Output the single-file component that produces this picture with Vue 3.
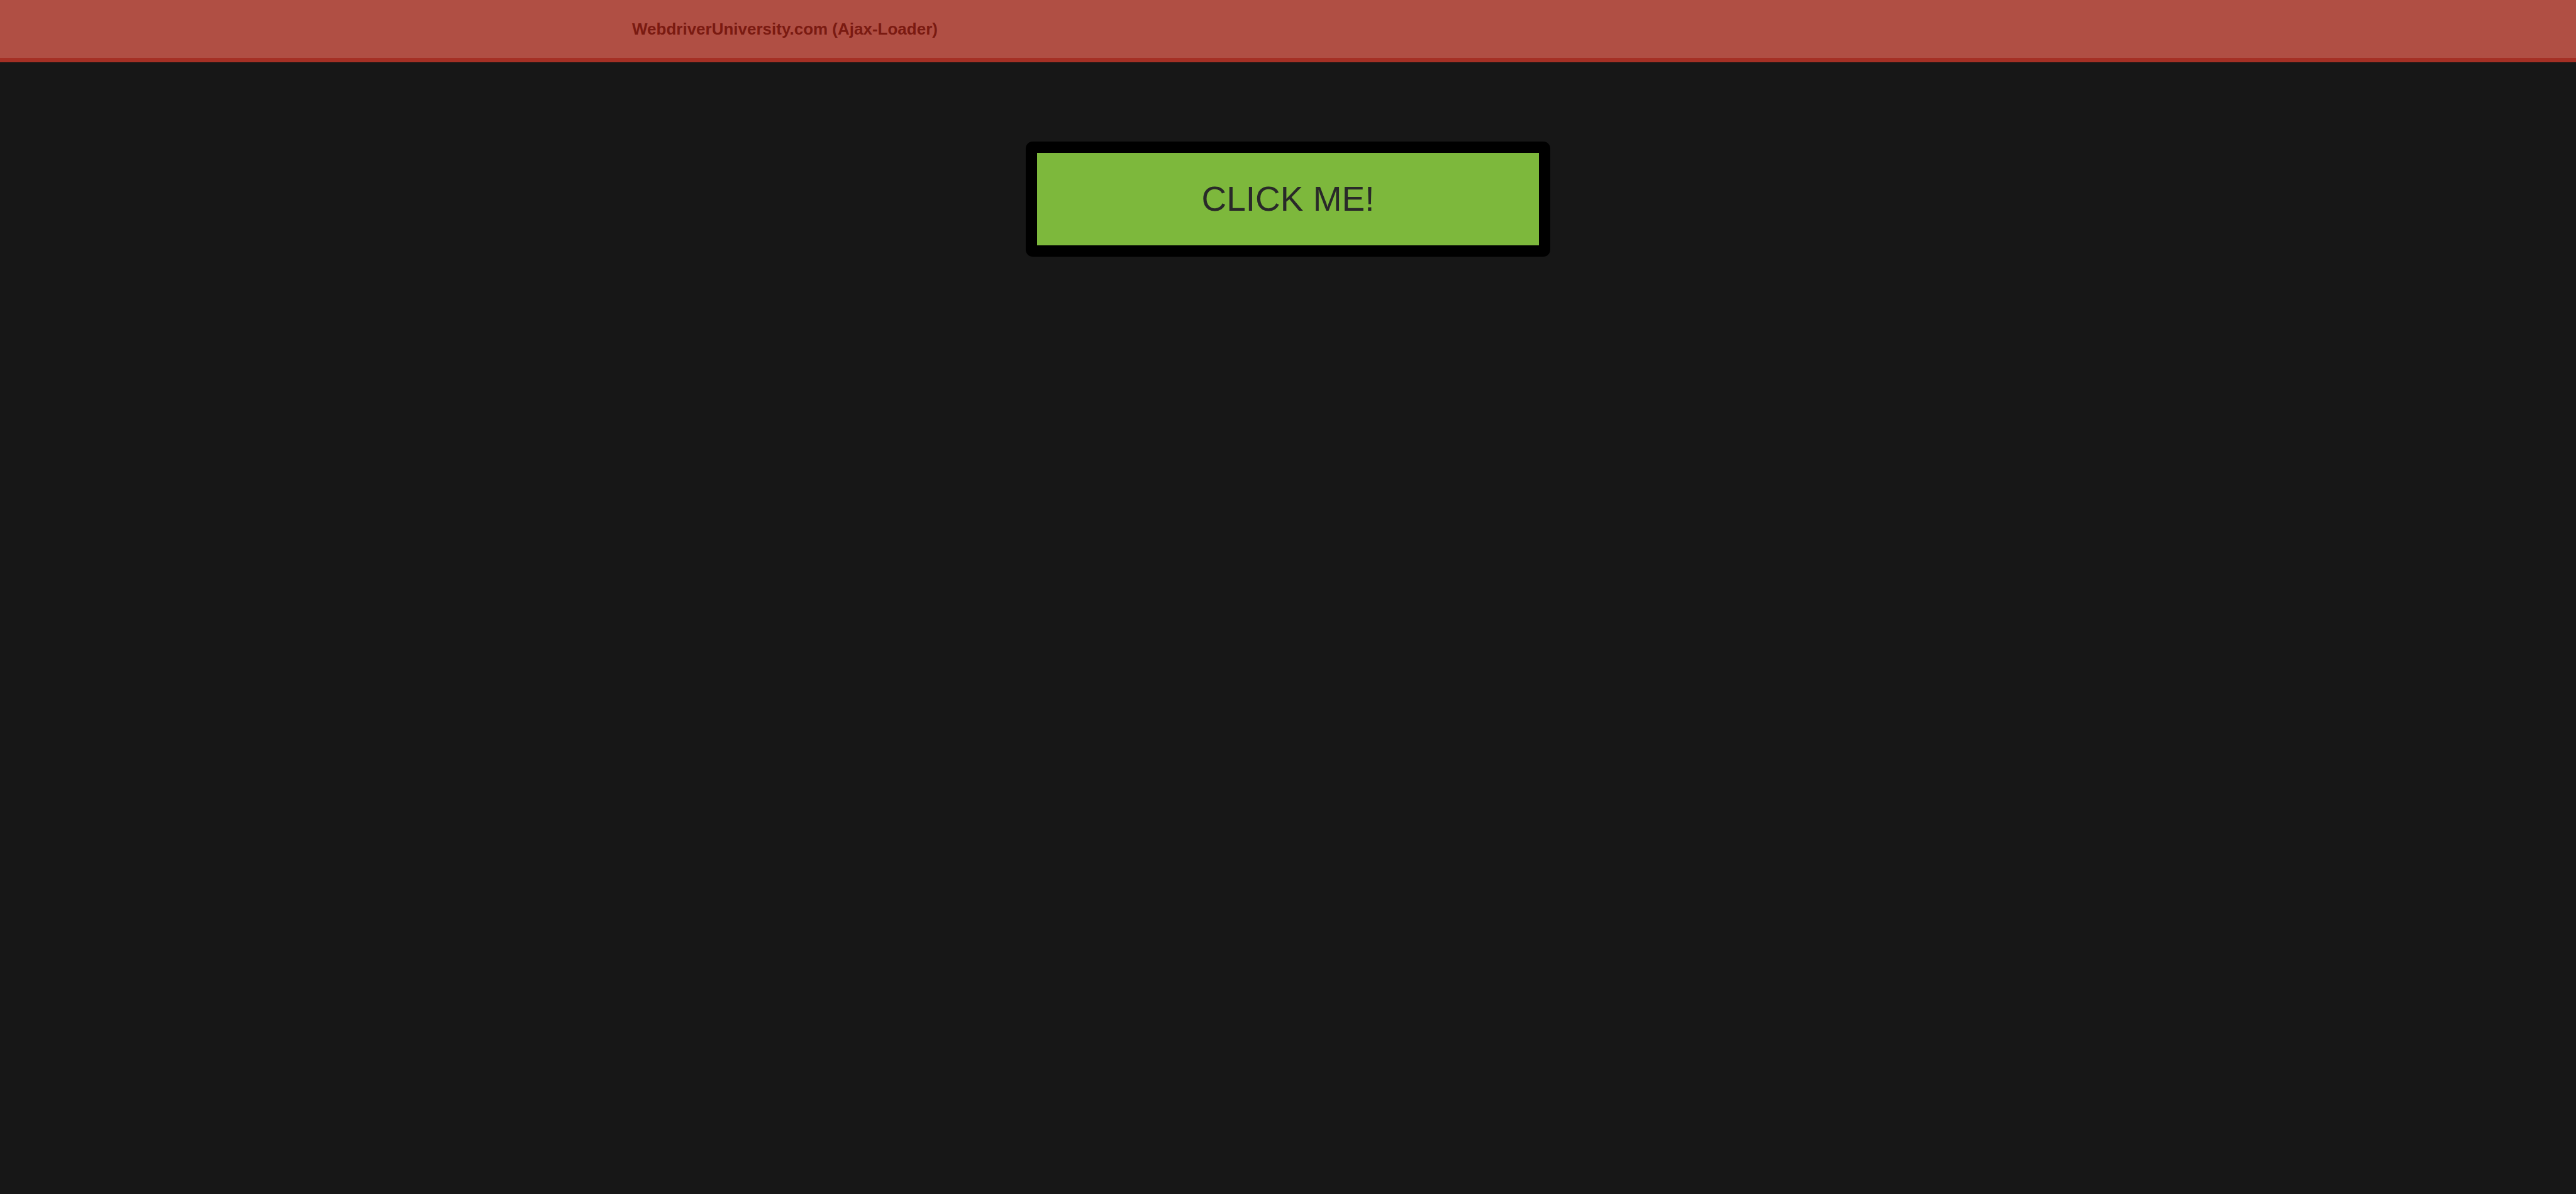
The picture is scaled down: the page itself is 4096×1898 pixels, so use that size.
<script setup>
const title = 'WebdriverUniversity.com (Ajax-Loader)'
const label = 'CLICK ME!'
</script>

<template>
  <div class="page">
    <nav class="navbar">
      <div class="container">
        <a class="brand" href="#">{{ title }}</a>
      </div>
    </nav>
    <main class="content">
      <button class="action" type="button">{{ label }}</button>
    </main>
  </div>
</template>

<style>
body {
  margin: 0;
  background: #171717;
}
</style>

<style scoped>
.page {
  min-height: 100vh;
  background: #171717;
  font-family: "Liberation Sans", Arial, sans-serif;
}

.navbar {
  background: #b04f44;
  border-bottom: 7px solid #a53025;
}

.container {
  display: flex;
  box-sizing: border-box;
  max-width: 2140px;
  margin: 0 auto;
  padding: 0 27px;
}

.brand {
  padding: 28px 0 27px;
  color: #7a1a11;
  font-size: 26px;
  font-weight: 700;
  line-height: 37px;
  text-decoration: none;
}

.content {
  display: flex;
  justify-content: center;
  padding-top: 126px;
}

.action {
  box-sizing: border-box;
  width: 834px;
  max-width: 100%;
  padding: 42px 24px;
  border: 18px solid #000;
  border-radius: 11px;
  background: #7db83c;
  color: #292929;
  font-family: inherit;
  font-size: 55px;
  line-height: 63px;
  text-align: center;
  cursor: pointer;
}
</style>
